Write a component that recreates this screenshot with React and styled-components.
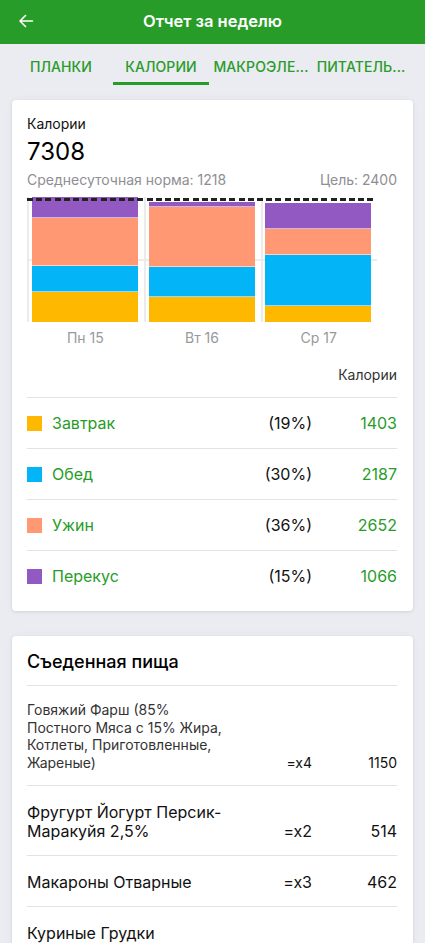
import React from "react";
import styled, { createGlobalStyle } from "styled-components";

const GlobalStyle = createGlobalStyle`
  * { box-sizing: border-box; }
  html, body { margin: 0; padding: 0; background: #ebebf2; }
  body { font-family: Inter, "Noto Sans", "DejaVu Sans", sans-serif; -webkit-font-smoothing: antialiased; }
`;

const GREEN = "#289c28";

const Page = styled.div`
  width: 425px;
  min-height: 943px;
  background: #ebebf2;
  padding-bottom: 24px;
`;

const Header = styled.header`
  height: 44px;
  background: ${GREEN};
  display: flex;
  align-items: center;
  justify-content: center;
  position: relative;
`;

const BackButton = styled.button`
  position: absolute;
  left: 12px;
  top: 8px;
  width: 28px;
  height: 26px;
  border: 0;
  padding: 0;
  background: transparent;
  display: flex;
  align-items: center;
  justify-content: center;
`;

const Title = styled.h1`
  margin: 0;
  font-size: 16.5px;
  font-weight: 600;
  color: #fff;
  line-height: 20px;
  margin-top: -2px;
`;

const Tabs = styled.nav`
  height: 44px;
  display: flex;
  gap: 4px;
  padding-left: 13px;
`;

const Tab = styled.div`
  flex: none;
  width: 96px;
  height: 41px;
  display: flex;
  align-items: center;
  justify-content: center;
  font-size: 14px;
  font-weight: 500;
  color: ${GREEN};
  letter-spacing: 0.1px;
  white-space: nowrap;
  overflow: hidden;
  padding-top: 7px;
  border-bottom: 3px solid ${(p) => (p.$active ? GREEN : "transparent")};
`;

const Card = styled.section`
  margin: ${(p) => p.$mt}px 12px 0 12px;
  background: #fff;
  border-radius: 4px;
  box-shadow: 0 1px 3px rgba(0, 0, 0, 0.09), 0 0 8px rgba(0, 0, 0, 0.04);
  padding: 15px 16px ${(p) => p.$pb}px 15px;
`;

const SmallLabel = styled.div`
  font-size: 14px;
  line-height: 17px;
  color: #111;
`;

const Total = styled.div`
  font-size: 24px;
  line-height: 29px;
  color: #000;
  margin-top: 5px;
`;

const SubRow = styled.div`
  display: flex;
  justify-content: space-between;
  font-size: 14px;
  line-height: 17px;
  color: #8e8e93;
  margin-top: 5px;
`;

const Chart = styled.div`
  position: relative;
  width: 350px;
  height: 125px;
  margin-top: 9px;
  display: flex;
`;

const HGrid = styled.div`
  position: absolute;
  left: 0;
  right: 0;
  top: 62px;
  height: 2px;
  background: #ececec;
  z-index: 0;
`;

const GoalLine = styled.div`
  position: absolute;
  left: 0;
  right: 0;
  top: 1px;
  height: 2.5px;
  background: repeating-linear-gradient(to right, #222 0 6px, transparent 6px 9.2px);
  z-index: 2;
`;

const Column = styled.div`
  flex: 1;
  border-left: 2px solid #ebebeb;
  padding-left: ${(p) => p.$pl}px;
  display: flex;
  align-items: flex-end;
  position: relative;
  z-index: 1;
`;

const Bar = styled.div`
  width: 106px;
  display: flex;
  flex-direction: column-reverse;
`;

const Segment = styled.div`
  background: ${(p) => p.$color};
  & + & {
    border-bottom: 1px solid rgba(255, 255, 255, 0.55);
  }
`;

const DayRow = styled.div`
  width: 350px;
  display: flex;
  margin-top: 7px;
`;

const DayLabel = styled.div`
  flex: 1;
  text-align: center;
  font-size: 14px;
  line-height: 17px;
  color: #999;
`;

const LegendHead = styled.div`
  text-align: right;
  font-size: 14px;
  line-height: 17px;
  color: #333;
  margin-top: 20px;
`;

const List = styled.div`
  margin-top: ${(p) => p.$mt}px;
`;

const MealRow = styled.div`
  height: 51px;
  border-top: 1px solid #e3e3e3;
  display: grid;
  grid-template-columns: 1fr 84px 85px;
  align-items: center;
  font-size: 16px;
  line-height: 19px;
`;

const MealName = styled.div`
  display: flex;
  align-items: center;
  gap: 10px;
  color: ${GREEN};
`;

const Swatch = styled.span`
  width: 15px;
  height: 15px;
  background: ${(p) => p.$color};
  flex: none;
`;

const Percent = styled.div`
  text-align: right;
  color: #111;
`;

const Value = styled.div`
  text-align: right;
  color: ${(p) => p.$color || "#111"};
`;

const CardTitle = styled.h2`
  margin: 0;
  font-size: 18px;
  line-height: 22px;
  font-weight: 500;
  color: #000;
`;

const FoodRow = styled.div`
  border-top: 1px solid #e3e3e3;
  padding: ${(p) => (p.$small ? "15px 0 14px" : "17px 0 14px")};
  display: grid;
  grid-template-columns: 1fr 84px 85px;
  align-items: end;
  font-size: ${(p) => (p.$small ? 14 : 16)}px;
  line-height: ${(p) => (p.$small ? 17.5 : 19)}px;
  color: ${(p) => (p.$small ? "#333" : "#111")};
`;

const FoodName = styled.div`
  padding-right: 4px;
`;

const meals = [
  { name: "Завтрак", color: "#ffb800", pct: "(19%)", value: 1403 },
  { name: "Обед", color: "#03b5f7", pct: "(30%)", value: 2187 },
  { name: "Ужин", color: "#ff9873", pct: "(36%)", value: 2652 },
  { name: "Перекус", color: "#9159c1", pct: "(15%)", value: 1066 },
];

const days = [
  { label: "Пн 15", pl: 3, seg: [30, 26.5, 47.5, 21] },
  { label: "Вт 16", pl: 3, seg: [25, 30, 60, 5.5] },
  { label: "Ср 17", pl: 2, seg: [16, 51, 26, 26] },
];

const foods = [
  { name: "Говяжий Фарш (85% Постного Мяса с 15% Жира, Котлеты, Приготовленные, Жареные)", qty: "=x4", kcal: 1150, small: true },
  { name: "Фругурт Йогурт Персик-Маракуйя 2,5%", qty: "=x2", kcal: 514 },
  { name: "Макароны Отварные", qty: "=x3", kcal: 462 },
  { name: "Куриные Грудки Приготовленные на Гриле", qty: "=x1", kcal: 330 },
];

function BackArrow() {
  return (
    <svg width="16" height="14" viewBox="0 0 16 14" fill="none">
      <path d="M14.5 7H2M7.5 1.5L2 7l5.5 5.5" stroke="#fff" strokeWidth="1.6" strokeLinecap="round" strokeLinejoin="round" />
    </svg>
  );
}

export default function App() {
  return (
    <Page>
      <GlobalStyle />
      <Header>
        <BackButton aria-label="Назад">
          <BackArrow />
        </BackButton>
        <Title>Отчет за неделю</Title>
      </Header>
      <Tabs>
        <Tab>ПЛАНКИ</Tab>
        <Tab $active>КАЛОРИИ</Tab>
        <Tab>МАКРОЭЛЕ...</Tab>
        <Tab>ПИТАТЕЛЬ...</Tab>
      </Tabs>

      <Card $mt={12} $pb={10}>
        <SmallLabel>Калории</SmallLabel>
        <Total>7308</Total>
        <SubRow>
          <span>Среднесуточная норма: 1218</span>
          <span>Цель: 2400</span>
        </SubRow>
        <Chart>
          <HGrid />
          <GoalLine />
          {days.map((d) => (
            <Column key={d.label} $pl={d.pl}>
              <Bar>
                {d.seg.map((h, i) => (
                  <Segment key={i} $color={meals[i].color} style={{ height: `${h}px` }} />
                ))}
              </Bar>
            </Column>
          ))}
        </Chart>
        <DayRow>
          {days.map((d) => (
            <DayLabel key={d.label}>{d.label}</DayLabel>
          ))}
        </DayRow>
        <LegendHead>Калории</LegendHead>
        <List $mt={14}>
          {meals.map((m) => (
            <MealRow key={m.name}>
              <MealName>
                <Swatch $color={m.color} />
                {m.name}
              </MealName>
              <Percent>{m.pct}</Percent>
              <Value $color={GREEN}>{m.value}</Value>
            </MealRow>
          ))}
        </List>
      </Card>

      <Card $mt={25} $pb={0}>
        <CardTitle>Съеденная пища</CardTitle>
        <List $mt={12}>
          {foods.map((f) => (
            <FoodRow key={f.name} $small={f.small}>
              <FoodName>{f.name}</FoodName>
              <Value>{f.qty}</Value>
              <Value>{f.kcal}</Value>
            </FoodRow>
          ))}
        </List>
      </Card>
    </Page>
  );
}
